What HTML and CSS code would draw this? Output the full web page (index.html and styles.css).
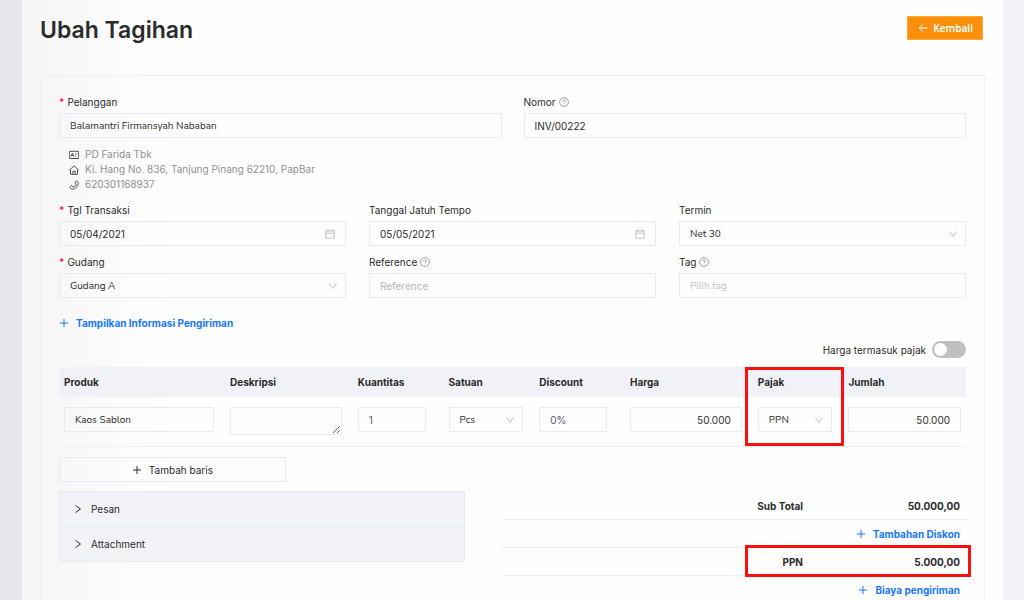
FILE: index.html
```html
<!DOCTYPE html>
<html lang="id">
<head>
<meta charset="utf-8">
<meta name="viewport" content="width=device-width, initial-scale=1">
<title>Ubah Tagihan</title>
<link rel="stylesheet" href="styles.css">
</head>
<body>
<svg class="defs" aria-hidden="true">
  <symbol id="chevron" viewBox="0 0 10 10"><path d="M1.5 2.500 5 7.500 8.500 2.500"/></symbol>
  <symbol id="plus" viewBox="0 0 10 10"><path d="M5 1v8M1 5h8"/></symbol>
  <symbol id="right" viewBox="0 0 10 10"><path d="M2.500 1.500 7.500 5 2.500 8.500"/></symbol>
  <symbol id="help" viewBox="0 0 10 10"><circle cx="5" cy="5" r="4.4"/><path d="M3.7 4.2C3.7 2.3 6.3 2.3 6.3 4.1 6.3 5 5 5 5 6M5 6.8v.7"/></symbol>
  <symbol id="calendar" viewBox="0 0 10 10"><path d="M.8 1.8h8.4v7.4H.8zM.8 4.2h8.4M3 .5v2.2M7 .5v2.2"/></symbol>
</svg>
<main class="sheet">
  <header class="page-head">
    <h1 class="title">Ubah Tagihan</h1>
    <button class="back" type="button"><svg class="icon" viewBox="0 0 10 10" aria-hidden="true"><path d="M9.500 5H1.500M5 1.200 1.200 5 5 8.800"/></svg>Kembali</button>
  </header>
  <form class="card">
    <div class="row two">
      <div class="field">
        <label class="label required" for="pelanggan">Pelanggan</label>
        <input class="control humanist" id="pelanggan" type="text" value="Balamantri Firmansyah Nababan">
      </div>
      <div class="field">
        <label class="label" for="nomor">Nomor <svg class="icon muted"><use href="#help"/></svg></label>
        <input class="control" id="nomor" type="text" value="INV/00222">
      </div>
    </div>
    <ul class="contact">
      <li><svg class="icon" viewBox="0 0 10 10" aria-hidden="true"><path d="M.3 1.3h9.4v7.2H.3zM1.9 6.6 3.4 3l1.5 3.6M2.4 5.5h2M6 4h.8M7.4 4h.9M6.2 6.2h.9"/></svg>PD Farida Tbk</li>
      <li><svg class="icon" viewBox="0 0 10 10" aria-hidden="true"><path d="M.2 5.4 5 .8l4.8 4.6M1.5 4.6v4.8h7V4.6M3.8 9.2V6.3h2.4v2.9"/></svg>Ki. Hang No. 836, Tanjung Pinang 62210, PapBar</li>
      <li><svg class="icon" viewBox="0 0 10 10" aria-hidden="true"><path d="M7.4.8 5.8 2.4l1.3 1.7C6.6 5.6 5.6 6.6 4.1 7.1L2.5 5.7.8 7.3C1.2 8.7 2.3 9.2 3.5 9.2 6.6 8.9 8.9 6.6 9.2 3.5 9.2 2.3 8.7 1.2 7.4.8z"/></svg>620301168937</li>
    </ul>
    <div class="row three">
      <div class="field">
        <label class="label required" for="tgl">Tgl Transaksi</label>
        <div class="wrap"><input class="control" id="tgl" type="text" value="05/04/2021"><svg class="icon affix inset"><use href="#calendar"/></svg></div>
      </div>
      <div class="field">
        <label class="label" for="tempo">Tanggal Jatuh Tempo</label>
        <div class="wrap"><input class="control" id="tempo" type="text" value="05/05/2021"><svg class="icon affix inset"><use href="#calendar"/></svg></div>
      </div>
      <div class="field">
        <label class="label" for="termin">Termin</label>
        <div class="wrap"><select class="control humanist" id="termin"><option>Net 30</option></select><svg class="icon affix"><use href="#chevron"/></svg></div>
      </div>
      <div class="field">
        <label class="label required" for="gudang">Gudang</label>
        <div class="wrap"><select class="control humanist" id="gudang"><option>Gudang A</option></select><svg class="icon affix"><use href="#chevron"/></svg></div>
      </div>
      <div class="field">
        <label class="label" for="reference">Reference <svg class="icon muted"><use href="#help"/></svg></label>
        <input class="control" id="reference" type="text" placeholder="Reference">
      </div>
      <div class="field">
        <label class="label" for="tag">Tag <svg class="icon muted"><use href="#help"/></svg></label>
        <input class="control humanist grey" id="tag" type="text" placeholder="Pilih tag">
      </div>
    </div>
    <a class="link shipping" href="#"><svg class="icon"><use href="#plus"/></svg>Tampilkan Informasi Pengiriman</a>
    <div class="tax-toggle">
      <label for="incl">Harga termasuk pajak</label>
      <input class="switch" id="incl" type="checkbox" role="switch">
    </div>
    <table class="items">
      <colgroup><col class="c-product"><col class="c-wide"><col class="c-slim"><col class="c-slim"><col class="c-slim"><col class="c-wide"><col class="c-slim"><col></colgroup>
      <thead>
        <tr><th>Produk</th><th>Deskripsi</th><th>Kuantitas</th><th>Satuan</th><th>Discount</th><th>Harga</th><th class="marked">Pajak</th><th>Jumlah</th></tr>
      </thead>
      <tbody>
        <tr>
          <td><input class="control humanist" type="text" aria-label="Produk" value="Kaos Sablon"></td>
          <td><textarea class="control area" aria-label="Deskripsi"></textarea></td>
          <td class="short"><input class="control violet" type="text" aria-label="Kuantitas" value="1"></td>
          <td><div class="wrap"><select class="control humanist" aria-label="Satuan"><option>Pcs</option></select><svg class="icon affix"><use href="#chevron"/></svg></div></td>
          <td class="short"><input class="control violet" type="text" aria-label="Discount" value="0%"></td>
          <td><input class="control number" type="text" aria-label="Harga" value="50.000"></td>
          <td><div class="wrap"><select class="control humanist" aria-label="Pajak"><option>PPN</option></select><svg class="icon affix"><use href="#chevron"/></svg></div></td>
          <td class="last"><input class="control number" type="text" aria-label="Jumlah" value="50.000"></td>
        </tr>
      </tbody>
    </table>
    <button class="add-row" type="button"><svg class="icon"><use href="#plus"/></svg>Tambah baris</button>
    <div class="bottom">
      <div class="panels">
        <button class="panel" type="button" aria-expanded="false"><svg class="icon"><use href="#right"/></svg>Pesan</button>
        <button class="panel" type="button" aria-expanded="false"><svg class="icon"><use href="#right"/></svg>Attachment</button>
      </div>
      <div class="totals">
        <div class="total"><span>Sub Total</span><span class="amount">50.000,00</span></div>
        <div class="total"><a class="link" href="#"><svg class="icon"><use href="#plus"/></svg>Tambahan Diskon</a></div>
        <div class="total highlighted"><span>PPN</span><span class="amount">5.000,00</span></div>
        <div class="total"><a class="link" href="#"><svg class="icon"><use href="#plus"/></svg>Biaya pengiriman</a></div>
      </div>
    </div>
  </form>
</main>
</body>
</html>
```
FILE: styles.css
```css
*, *::before, *::after { box-sizing: border-box; }
body {
  margin: 0;
  min-height: 100vh;
  padding: 0 21px 0 22px;
  background: linear-gradient(to right, #e4e6ec, #f2f3f8 160px);
  font: 10px/16px Inter, "Liberation Sans", sans-serif;
  color: #2b2b2b;
}
input, select, textarea, button { font: inherit; color: inherit; }
.defs { display: none; }
.icon {
  width: 10px;
  height: 10px;
  flex: none;
  fill: none;
  stroke: currentColor;
  stroke-width: 1;
}
.sheet {
  min-height: 100vh;
  padding: 12px 18px 0;
  background: linear-gradient(to right, #f5f5f5, #fefefe 140px);
}
.page-head {
  display: flex;
  justify-content: space-between;
  align-items: flex-start;
  height: 63px;
  padding-right: 2px;
}
.title { margin: 0; font-size: 23px; line-height: 36px; font-weight: 600; }
.back {
  display: flex;
  align-items: center;
  gap: 5px;
  height: 24px;
  margin-top: 4px;
  padding: 0 9px 0 10px;
  border: 1px solid #ffa733;
  background: #fb900c;
  color: #fff;
  font-family: "Noto Sans", sans-serif;
  font-weight: 600;
}
.card { padding: 18px 18px 0; border: 1px solid #efeff1; border-bottom: 0; }
.row { display: grid; row-gap: 8px; }
.two { grid-template-columns: 1fr 1fr; column-gap: 22px; }
.three { grid-template-columns: 1fr 1fr 1fr; column-gap: 23px; }
.label { display: flex; align-items: center; gap: 3px; margin-bottom: 3px; }
.label.required::before { content: "*"; color: #f5223d; font-weight: 600; }
.muted { color: #8a8a8a; stroke-width: 0.8; }
.control {
  display: block;
  width: 100%;
  height: 25px;
  margin: 0;
  padding: 0 10px;
  border: 1px solid #e8eaf3;
  border-radius: 1px;
  outline: 0;
  background: transparent;
  appearance: none;
}
.control::placeholder { color: #b0b4c3; opacity: 1; }
.grey::placeholder { color: #bfbfbf; }
.humanist { font-family: "Nunito Sans", "Noto Sans", sans-serif; }
.violet { color: #5a5475; }
.number { text-align: right; }
.area { height: 28px; resize: vertical; }
.wrap { position: relative; }
.affix { position: absolute; top: 8px; right: 8px; color: #c0c0c0; pointer-events: none; }
.inset { right: 11px; }
.contact {
  margin: 9px 0 10px;
  padding: 0 0 0 10px;
  list-style: none;
  line-height: 15px;
  color: #909090;
}
.contact li { display: flex; align-items: center; gap: 6px; }
.contact .icon { color: #555; }
.link {
  display: flex;
  align-items: center;
  gap: 7px;
  color: #1677ff;
  font-weight: 700;
  text-decoration: none;
}
.shipping { width: max-content; margin-top: 17px; }
.tax-toggle { display: flex; justify-content: flex-end; align-items: center; gap: 6px; margin: 10px 0 9px; }
.switch {
  display: flex;
  width: 34px;
  height: 17px;
  margin: 0;
  padding: 2px;
  border-radius: 9px;
  background: #bfbfbf;
  appearance: none;
}
.switch::before { content: ""; width: 13px; height: 13px; border-radius: 50%; background: #fff; }
.switch:checked { justify-content: flex-end; background: #1677ff; }
.items { width: 100%; border-collapse: collapse; table-layout: fixed; }
.c-product { width: 18.3%; }
.c-wide { width: 14.1%; }
.c-slim { width: 10%; }
.items th { height: 30px; padding: 0 5px; background: #f1f2f7; text-align: left; font-weight: 700; }
.items td { padding: 10px 11px 11px 5px; border-bottom: 1px solid #efeff1; vertical-align: top; }
.items .short { padding-right: 18px; }
.items .last { padding-right: 5px; }
.marked { position: relative; }
.marked::after {
  content: "";
  position: absolute;
  top: 0;
  right: -1px;
  width: 99px;
  height: 79px;
  border: 3px solid #fa0f0c;
  pointer-events: none;
}
.add-row {
  display: flex;
  justify-content: center;
  align-items: center;
  gap: 7px;
  width: 25%;
  height: 25px;
  margin: 10px 0 9px;
  border: 1px solid #e8eaf3;
  background: transparent;
}
.bottom { display: flex; justify-content: space-between; align-items: flex-start; margin-right: -5px; }
.panels { width: 44.5%; border: 1px solid #e6eaf2; background: #f2f3f7; }
.panel {
  display: flex;
  align-items: center;
  gap: 8px;
  width: 100%;
  height: 34px;
  padding: 0 13px;
  border: 0;
  background: transparent;
}
.panel + .panel { height: 35px; border-top: 1px solid #e0e8f0; }
.totals { width: 51.5%; padding-top: 1px; }
.total {
  position: relative;
  display: flex;
  justify-content: flex-end;
  align-items: center;
  height: 28px;
  padding-right: 11px;
  border-bottom: 1px solid #efeff1;
  font-weight: 700;
}
.amount { width: 157px; text-align: right; }
.highlighted::after {
  content: "";
  position: absolute;
  inset: -3px 0 -2px auto;
  width: 226px;
  border: 3px solid #fa0f0c;
  pointer-events: none;
}
```
